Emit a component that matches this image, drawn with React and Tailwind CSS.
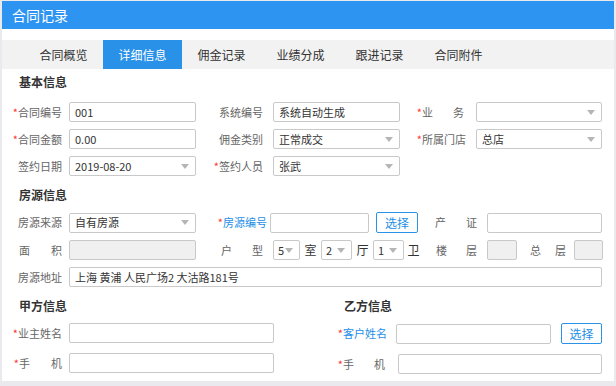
import React from 'react';

const tabs = ['合同概览', '详细信息', '佣金记录', '业绩分成', '跟进记录', '合同附件'];

const Label = ({ text, req, blue, w, pr = 7, justify }) => (
  <div className="shrink-0 flex items-center justify-end" style={{ width: w, paddingRight: pr }}>
    {req && <span className="text-[#f33]">*</span>}
    <span
      className={`${blue ? 'text-[#1e8fe6]' : 'text-[#666]'} ${justify ? 'flex justify-between' : ''}`}
      style={justify ? { width: justify } : undefined}
    >
      {justify ? text.split('').map((c, i) => <span key={i}>{c}</span>) : text}
    </span>
  </div>
);

const Input = ({ w, value, gray }) => (
  <div
    className={`shrink-0 h-[20px] border border-[#c9c9c9] rounded-[2px] px-[5px] flex items-center text-[#333] ${gray ? 'bg-[#f0f0f0]' : 'bg-white'}`}
    style={{ width: w }}
  >
    {value}
  </div>
);

const Select = ({ w, value, pad = 5 }) => (
  <div
    className="shrink-0 h-[20px] border border-[#c9c9c9] rounded-[2px] flex items-center justify-between text-[#333] bg-white"
    style={{ width: w, paddingLeft: pad, paddingRight: 6 }}
  >
    <span>{value}</span>
    <svg width="8" height="5" viewBox="0 0 8 5"><path d="M0 0h8L4 5z" fill="#b5b5b5" /></svg>
  </div>
);

const Btn = ({ w = 42 }) => (
  <div
    className="shrink-0 h-[21px] border border-[#2a93e8] rounded-[2px] flex items-center justify-center text-[12px] text-[#1e8fe6] bg-white"
    style={{ width: w }}
  >
    选择
  </div>
);

const Title = ({ children, ml = 17 }) => (
  <div className="font-bold text-[12px] text-[#333]" style={{ marginLeft: ml }}>{children}</div>
);

export default function App() {
  return (
    <div
      className="w-[616px] h-[386px] bg-[#e9e9ee] pl-[2px] pt-[1px] overflow-hidden text-[11px]"
      style={{ fontFamily: '"Noto Sans CJK SC", "Noto Sans", sans-serif' }}
    >
      <div className="w-[612px] h-[380px] bg-white relative">
        <div className="h-[28px] bg-[#2d94f2] text-white text-[14px] flex items-center pl-[10px]">合同记录</div>
        <div className="mt-[11px] h-[29px] bg-[#f2f2f2] flex pl-[22px] text-[12px] text-[#333]">
          {tabs.map((t, i) => (
            <div
              key={t}
              className={`w-[79px] flex items-center justify-center ${i === 1 ? 'bg-[#2991e8] text-white' : ''}`}
            >
              {t}
            </div>
          ))}
        </div>

        <div className="mt-[7px] leading-none">
          <Title>基本信息</Title>
          <div className="mt-[14px] flex flex-col gap-[7px]">
            <div className="flex items-center">
              <Label w={67} text="合同编号" req />
              <Input w={127} value="001" />
              <Label w={77} pr={10} text="系统编号" />
              <Input w={127} value="系统自动生成" />
              <Label w={76} pr={12} text="业务" req justify={42} />
              <Select w={126} value="" />
            </div>
            <div className="flex items-center">
              <Label w={67} text="合同金额" req />
              <Input w={127} value="0.00" />
              <Label w={77} pr={10} text="佣金类别" />
              <Select w={127} value="正常成交" />
              <Label w={76} pr={10} text="所属门店" req />
              <Select w={126} value="总店" />
            </div>
            <div className="flex items-center">
              <Label w={67} text="签约日期" />
              <Select w={127} value="2019-08-20" />
              <Label w={77} pr={10} text="签约人员" req />
              <Select w={127} value="张武" />
            </div>
          </div>

          <div className="mt-[13px]"><Title>房源信息</Title></div>
          <div className="mt-[11px] flex flex-col gap-[7px]">
            <div className="flex items-center">
              <Label w={67} text="房源来源" />
              <Select w={127} value="自有房源" />
              <Label w={74} pr={3} text="房源编号" req blue />
              <Input w={99} value="" />
              <div className="w-[7px]" />
              <Btn />
              <Label w={69} pr={10} text="产证" justify={42} />
              <Input w={115} value="" />
            </div>
            <div className="flex items-center">
              <Label w={67} text="面积" justify={43} />
              <Input w={127} value="" gray />
              <Label w={77} pr={10} text="户型" justify={42} />
              <Select w={27} value="5" pad={4} />
              <span className="w-[21px] text-center text-[12px] text-[#333]">室</span>
              <Select w={31} value="2" pad={4} />
              <span className="w-[21px] text-center text-[12px] text-[#333]">厅</span>
              <Select w={31} value="1" pad={4} />
              <span className="w-[19px] text-center text-[12px] text-[#333]">卫</span>
              <Label w={64} pr={10} text="楼层" justify={41} />
              <Input w={30} value="" gray />
              <Label w={57} pr={8} text="总层" justify={36} />
              <Input w={29} value="" gray />
            </div>
            <div className="flex items-center">
              <Label w={67} text="房源地址" />
              <Input w={533} value="上海 黄浦 人民广场2 大沽路181号" />
            </div>
          </div>

          <div className="mt-[13px] flex">
            <div className="w-[325px]">
              <Title>甲方信息</Title>
              <div className="mt-[11px] flex flex-col gap-[10px]">
                <div className="flex items-center">
                  <Label w={67} text="业主姓名" req />
                  <Input w={205} value="" />
                </div>
                <div className="flex items-center">
                  <Label w={67} text="手机" req justify={43} />
                  <Input w={205} value="" />
                </div>
              </div>
            </div>
            <div className="flex-1">
              <Title ml={17}>乙方信息</Title>
              <div className="mt-[11px] flex flex-col gap-[10px]">
                <div className="flex items-center">
                  <Label w={69} pr={9} text="客户姓名" req blue />
                  <Input w={155} value="" />
                  <div className="w-[10px]" />
                  <Btn w={41} />
                </div>
                <div className="flex items-center">
                  <Label w={71} pr={13} text="手机" req justify={42} />
                  <Input w={204} value="" />
                </div>
              </div>
            </div>
          </div>
        </div>
      </div>
    </div>
  );
}
